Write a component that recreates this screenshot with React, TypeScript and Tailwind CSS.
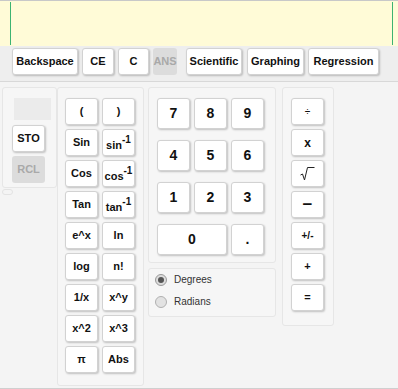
import React from "react";

const btn =
  "flex items-center justify-center bg-white border border-[#d2d2d2] rounded-[3px] shadow-[1px_1px_2px_rgba(0,0,0,0.22)] text-[#111] font-bold";
const dis =
  "flex items-center justify-center bg-[#dcdcdc] rounded-[3px] text-[#a9a9a9] font-bold";
const panel = "border border-[#e6e6e6] rounded-[3px] bg-[#f6f6f6]";

function Sup({ base }: { base: string }) {
  return (
    <span className="pt-[6px]">
      {base}
      <span className="relative top-[-6px] text-[10px]">-1</span>
    </span>
  );
}

export default function App() {
  const fn: React.ReactNode[][] = [
    ["(", ")"],
    ["Sin", <Sup base="sin" />],
    ["Cos", <Sup base="cos" />],
    ["Tan", <Sup base="tan" />],
    ["e^x", "ln"],
    ["log", "n!"],
    ["1/x", "x^y"],
    ["x^2", "x^3"],
    ["π", "Abs"],
  ];
  const ops: React.ReactNode[] = [
    <span className="text-[10px] font-normal">÷</span>,
    <span className="text-[12px]">x</span>,
    <svg width="15" height="15" viewBox="0 0 15 15">
      <path d="M0.5 9 L2.5 8 L4.5 14 L7.5 1.5 L14.5 1.5" fill="none" stroke="#222" strokeWidth="1" />
    </svg>,
    <span className="text-[17px] leading-none">−</span>,
    <span className="text-[10px]">+/-</span>,
    <span className="text-[11px]">+</span>,
    <span className="text-[11px]">=</span>,
  ];
  return (
    <div
      className="w-[398px] h-[389px] bg-[#f4f4f4] overflow-hidden flex flex-col"
      style={{ fontFamily: '"Liberation Sans", Arial, sans-serif' }}
    >
      {/* display */}
      <div className="h-[46px] border-t border-[#c8c8c8] bg-[#fffbd7] flex pt-[1px] pb-[1px]">
        <div className="ml-[10px] w-[1px] bg-[#3cb371]" />
        <div className="flex-1" />
        <div className="mr-[5px] w-[1px] bg-[#3cb371]" />
      </div>
      {/* toolbar */}
      <div className="h-[36px] bg-[#eeeeee] border-b border-[#d8d8d8] flex items-start pt-[2px] pl-[12px] text-[11px]">
        <button className={`${btn} w-[66px] h-[27px]`}>Backspace</button>
        <button className={`${btn} w-[32px] h-[27px] ml-[4px]`}>CE</button>
        <button className={`${btn} w-[31px] h-[27px] ml-[4px]`}>C</button>
        <button className={`${dis} w-[24px] h-[27px] ml-[4px]`}>ANS</button>
        <button className={`${btn} w-[56px] h-[27px] ml-[9px]`}>Scientific</button>
        <button className={`${btn} w-[57px] h-[27px] ml-[5px]`}>Graphing</button>
        <button className={`${btn} w-[71px] h-[27px] ml-[4px]`}>Regression</button>
      </div>
      {/* main */}
      <div className="flex-1 border-b border-[#cfcfcf] flex items-start pl-[2px] pt-[5px]">
        {/* memory */}
        <div className="flex flex-col">
          <div className={`${panel} w-[55px] h-[101px] flex flex-col pl-[9px] pt-[10px]`}>
            <div className="ml-[2px] w-[37px] h-[22px] bg-[#ebebeb]" />
            <button className={`${btn} w-[33px] h-[27px] mt-[5px] text-[11px]`}>STO</button>
            <button className={`${dis} w-[33px] h-[27px] mt-[4px] text-[11px]`}>RCL</button>
          </div>
          <div className="mt-[1px] w-[11px] h-[6px] rounded-[3px] border border-[#e3e3e3]" />
        </div>
        {/* functions */}
        <div className={`${panel} w-[87px] h-[299px] flex flex-col gap-[4px] pl-[7px] pt-[10px]`}>
          {fn.map((r, i) => (
            <div key={i} className="flex gap-[4px]">
              <button className={`${btn} w-[33px] h-[27px] text-[11px]`}>{r[0]}</button>
              <button className={`${btn} w-[33px] h-[27px] text-[11px]`}>{r[1]}</button>
            </div>
          ))}
        </div>
        {/* numbers */}
        <div className="ml-[4px] flex flex-col">
          <div className={`${panel} w-[128px] h-[176px] flex flex-col gap-[11px] pl-[8px] pt-[10px] text-[14px]`}>
            {[
              ["7", "8", "9"],
              ["4", "5", "6"],
              ["1", "2", "3"],
            ].map((r, i) => (
              <div key={i} className="flex gap-[4px]">
                {r.map((d) => (
                  <button key={d} className={`${btn} w-[33px] h-[31px]`}>
                    {d}
                  </button>
                ))}
              </div>
            ))}
            <div className="flex gap-[4px]">
              <button className={`${btn} w-[70px] h-[31px]`}>0</button>
              <button className={`${btn} w-[33px] h-[31px]`}>.</button>
            </div>
          </div>
          <div className={`${panel} w-[128px] h-[49px] mt-[5px] flex flex-col pl-[6px] pt-[4px] gap-[9px] text-[10px] text-[#333]`}>
            <div className="flex items-center h-[13px]">
              <span className="w-[12px] h-[12px] rounded-full border border-[#9a9a9a] bg-[#dcdcdc] flex items-center justify-center">
                <span className="w-[6px] h-[6px] rounded-full bg-[#555]" />
              </span>
              <span className="ml-[7px]">Degrees</span>
            </div>
            <div className="flex items-center h-[13px]">
              <span className="w-[12px] h-[12px] rounded-full border border-[#b0b0b0] bg-[#e2e2e2]" />
              <span className="ml-[7px]">Radians</span>
            </div>
          </div>
        </div>
        {/* operators */}
        <div className={`${panel} ml-[6px] w-[52px] h-[239px] flex flex-col gap-[4px] pl-[8px] pt-[10px]`}>
          {ops.map((o, i) => (
            <button key={i} className={`${btn} w-[33px] h-[27px]`}>
              {o}
            </button>
          ))}
        </div>
      </div>
    </div>
  );
}
